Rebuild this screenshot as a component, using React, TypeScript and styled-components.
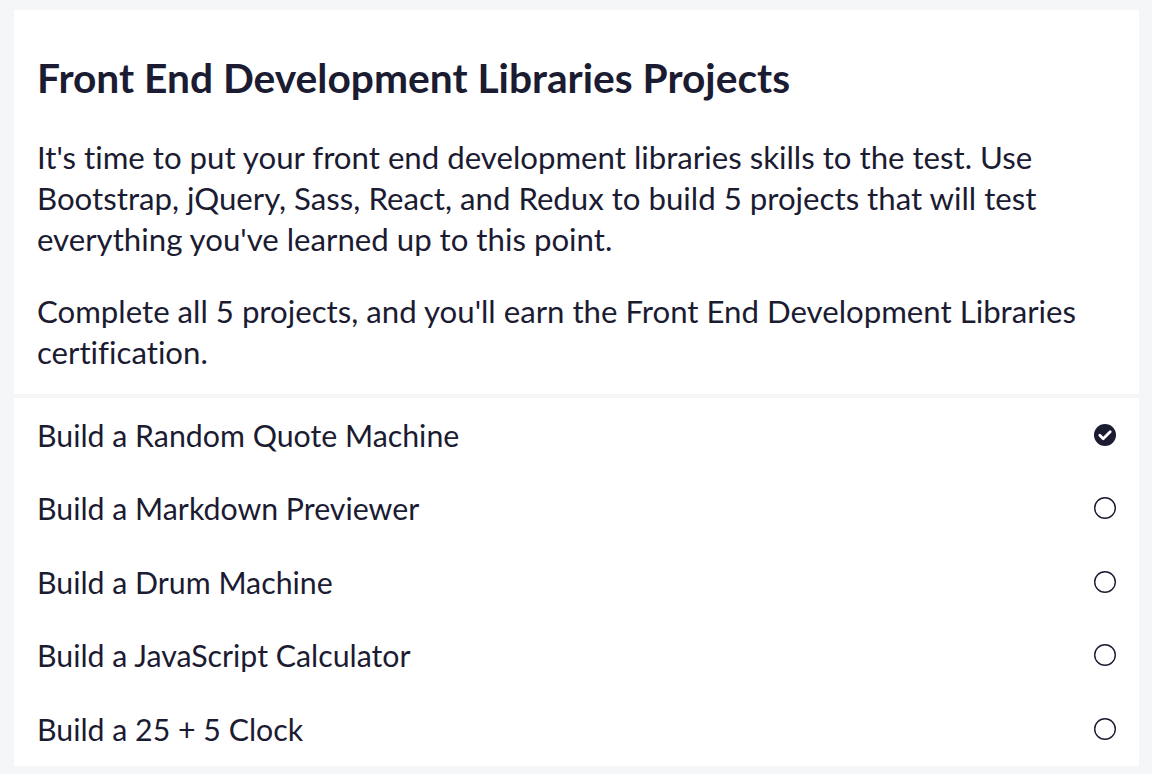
import React from "react";
import styled, { createGlobalStyle } from "styled-components";

const Global = createGlobalStyle`
  html, body { margin: 0; padding: 0; background: #f5f6f7; }
  body {
    font-family: Lato, "Noto Sans", sans-serif;
    color: #1b1b32;
    font-variant-ligatures: no-common-ligatures;
    font-feature-settings: "liga" 0, "clig" 0;
  }
  * { box-sizing: border-box; }
`;

const Page = styled.div`
  padding: 10px 13px 9px 14px;
  display: flex;
  flex-direction: column;
  gap: 4px;
`;

const Header = styled.section`
  background: #ffffff;
  padding: 44px 23px 21px;
`;

const Title = styled.h2`
  margin: 0 0 35px;
  font-size: 40.7px;
  line-height: 48px;
  font-weight: 700;
`;

const Para = styled.p`
  margin: 0 0 31px;
  font-size: 31.2px;
  line-height: 41px;
  &:last-child { margin-bottom: 0; }
`;

const List = styled.ul`
  background: #ffffff;
  margin: 0;
  padding: 0;
  list-style: none;
`;

const Row = styled.li`
  height: 73.5px;
  display: flex;
  align-items: center;
  justify-content: space-between;
  padding: 0 22px 0 23px;
  font-size: 30.3px;
`;

const Icon = styled.svg`
  width: 24px;
  height: 24px;
  flex: none;
`;

const Done = () => (
  <Icon viewBox="0 0 24 24">
    <circle cx="12" cy="12" r="11" fill="#1b1b32" />
    <path d="M6.8 12.3l3.4 3.4 7-7" fill="none" stroke="#fff" strokeWidth="2.8" strokeLinecap="round" strokeLinejoin="round" />
  </Icon>
);

const Todo = () => (
  <Icon viewBox="0 0 24 24">
    <circle cx="12" cy="12" r="10.3" fill="none" stroke="#1b1b32" strokeWidth="1.4" />
  </Icon>
);

const projects = [
  { name: "Build a Random Quote Machine", done: true },
  { name: "Build a Markdown Previewer", done: false },
  { name: "Build a Drum Machine", done: false },
  { name: "Build a JavaScript Calculator", done: false },
  { name: "Build a 25 + 5 Clock", done: false },
];

export default function App() {
  return (
    <>
      <Global />
      <Page>
        <Header>
          <Title>Front End Development Libraries Projects</Title>
          <Para>
            It's time to put your front end development libraries skills to the test. Use Bootstrap, jQuery, Sass, React, and Redux to build 5 projects that will test everything you've learned up to this point.
          </Para>
          <Para>
            Complete all 5 projects, and you'll earn the Front End Development Libraries certification.
          </Para>
        </Header>
        <List>
          {projects.map((p) => (
            <Row key={p.name}>
              <span>{p.name}</span>
              {p.done ? <Done /> : <Todo />}
            </Row>
          ))}
        </List>
      </Page>
    </>
  );
}
